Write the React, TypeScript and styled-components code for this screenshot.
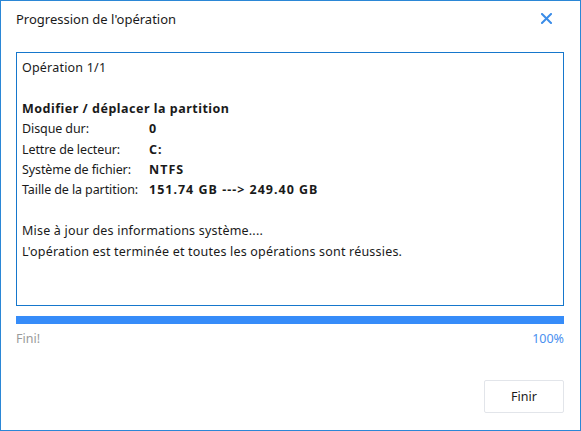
import React from "react";
import styled, { createGlobalStyle } from "styled-components";

const Global = createGlobalStyle`
  html, body {
    margin: 0;
    padding: 0;
    background: #ffffff;
  }
  body {
    font-family: "Noto Sans", "Open Sans", sans-serif;
    font-size: 12.5px;
    color: #1a1a1a;
  }
`;

const Window = styled.div`
  box-sizing: border-box;
  width: 581px;
  height: 431px;
  border: 1px solid #2b87d6;
  background: #ffffff;
  display: flex;
  flex-direction: column;
  padding: 0 16px 0 15px;
`;

const TitleBar = styled.div`
  height: 51px;
  display: flex;
  align-items: flex-start;
  justify-content: space-between;
  padding-top: 9px;
  box-sizing: border-box;
`;

const Title = styled.div`
  font-size: 13px;
  line-height: 18px;
  color: #1a1a1a;
`;

const CloseButton = styled.button`
  border: 0;
  background: transparent;
  padding: 0;
  margin: 3px 12px 0 0;
  width: 11px;
  height: 11px;
  display: flex;
  cursor: pointer;
`;

const LogBox = styled.div`
  box-sizing: border-box;
  height: 254px;
  border: 1px solid #1677cc;
  padding: 5px 5px;
  line-height: 20.4px;
  font-size: 12.5px;
`;

const Line = styled.div<{ $bold?: boolean; $gap?: boolean }>`
  font-weight: ${(p) => (p.$bold ? 700 : 400)};
  letter-spacing: ${(p) => (p.$bold ? "0.5px" : "0.2px")};
  margin-top: ${(p) => (p.$gap ? "20.4px" : "0")};
  white-space: nowrap;
`;

const InfoRow = styled.div`
  display: grid;
  grid-template-columns: 127px auto;
  white-space: nowrap;
`;

const Label = styled.span`
  letter-spacing: -0.1px;
`;

const Value = styled.span`
  font-weight: 700;
  letter-spacing: 1px;
`;

const Progress = styled.div`
  margin-top: 10px;
  height: 8px;
  background: #e6e6e6;
`;

const ProgressFill = styled.div`
  height: 100%;
  background: #368cf9;
`;

const StatusRow = styled.div`
  display: flex;
  justify-content: space-between;
  margin-top: 6px;
  font-size: 12.5px;
  line-height: 18px;
`;

const StatusText = styled.span`
  color: #9a9a9a;
`;

const Percent = styled.span`
  color: #4a90f0;
`;

const Footer = styled.div`
  display: flex;
  justify-content: flex-end;
  margin-top: 32px;
`;

const FinishButton = styled.button`
  box-sizing: border-box;
  width: 80px;
  height: 33px;
  border: 1px solid #e2e5ea;
  border-radius: 2px;
  background: #ffffff;
  font-family: inherit;
  font-size: 12.5px;
  color: #1a1a1a;
  cursor: pointer;
`;

const rows: [string, string][] = [
  ["Disque dur:", "0"],
  ["Lettre de lecteur:", "C:"],
  ["Système de fichier:", "NTFS"],
  ["Taille de la partition:", "151.74 GB ---> 249.40 GB"],
];

export default function App() {
  const progress = 100;
  return (
    <>
      <Global />
      <Window>
        <TitleBar>
          <Title>Progression de l'opération</Title>
          <CloseButton aria-label="Fermer">
            <svg width="11" height="11" viewBox="0 0 11 11">
              <path
                d="M1 1 L10 10 M10 1 L1 10"
                stroke="#3a8ce8"
                strokeWidth="2"
                strokeLinecap="square"
              />
            </svg>
          </CloseButton>
        </TitleBar>
        <LogBox>
          <Line>Opération 1/1</Line>
          <Line $bold $gap>
            Modifier / déplacer la partition
          </Line>
          {rows.map(([label, value]) => (
            <InfoRow key={label}>
              <Label>{label}</Label>
              <Value>{value}</Value>
            </InfoRow>
          ))}
          <Line $gap>Mise à jour des informations système....</Line>
          <Line>L'opération est terminée et toutes les opérations sont réussies.</Line>
        </LogBox>
        <Progress>
          <ProgressFill style={{ width: `${progress}%` }} />
        </Progress>
        <StatusRow>
          <StatusText>Fini!</StatusText>
          <Percent>{progress}%</Percent>
        </StatusRow>
        <Footer>
          <FinishButton>Finir</FinishButton>
        </Footer>
      </Window>
    </>
  );
}
